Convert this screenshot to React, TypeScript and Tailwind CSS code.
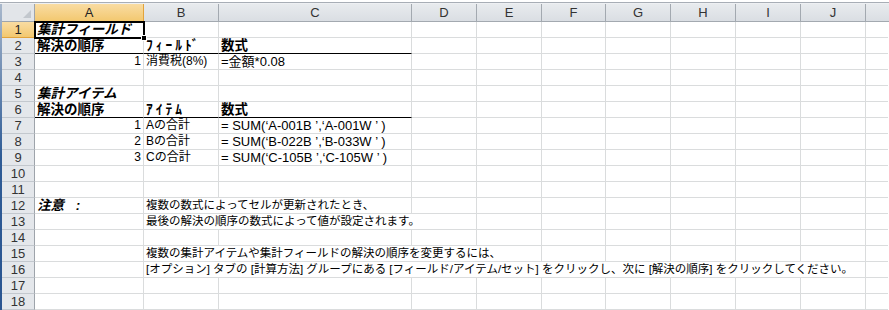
import React from "react";

const COLS = [109, 75, 193, 65, 65, 64, 65, 65, 65, 65, 22];
const LETTERS = ["A", "B", "C", "D", "E", "F", "G", "H", "I", "J", ""];

type Cell = { span?: number; text?: React.ReactNode; cls?: string; bottom?: boolean };

const BOLD = "font-bold text-[13.5px]";
const BI = "font-bold italic text-[13.5px]";
const LONG = "text-[11.5px]";
const FORM = "text-[13px]";

const ROWS: Cell[][] = [
  [{ text: "集計フィールド", cls: BI }],
  [
    { text: "解決の順序", cls: BOLD, bottom: true },
    { text: "ﾌｨｰﾙﾄﾞ", cls: BOLD + " tracking-[3px]", bottom: true },
    { text: "数式", cls: BOLD, bottom: true },
  ],
  [
    { text: "1", cls: "text-right text-[12px]" },
    { text: "消費税(8%)", cls: "text-[12px]" },
    { text: "=金額*0.08", cls: FORM },
  ],
  [],
  [{ text: "集計アイテム", cls: BI }],
  [
    { text: "解決の順序", cls: BOLD, bottom: true },
    { text: "ｱｲﾃﾑ", cls: BOLD + " tracking-[3px]", bottom: true },
    { text: "数式", cls: BOLD, bottom: true },
  ],
  [
    { text: "1", cls: "text-right text-[12px]" },
    { text: "Aの合計", cls: "text-[12px]" },
    { text: "= SUM(‘A-001B ’,‘A-001W ’ )", cls: FORM },
  ],
  [
    { text: "2", cls: "text-right text-[12px]" },
    { text: "Bの合計", cls: "text-[12px]" },
    { text: "= SUM(‘B-022B ’,‘B-033W ’ )", cls: FORM },
  ],
  [
    { text: "3", cls: "text-right text-[12px]" },
    { text: "Cの合計", cls: "text-[12px]" },
    { text: "= SUM(‘C-105B ’,‘C-105W ’ )", cls: FORM },
  ],
  [],
  [],
  [
    {
      text: (
        <>
          注意 <span className="ml-[8px]">:</span>
        </>
      ),
      cls: BI,
    },
    { span: 2, text: "複数の数式によってセルが更新されたとき、", cls: LONG },
  ],
  [{}, { span: 3, text: "最後の解決の順序の数式によって値が設定されます。", cls: LONG }],
  [],
  [{}, { span: 4, text: "複数の集計アイテムや集計フィールドの解決の順序を変更するには、", cls: LONG }],
  [
    {},
    {
      span: 9,
      text: "[オプション] タブの [計算方法] グループにある [フィールド/アイテム/セット] をクリックし、次に [解決の順序] をクリックしてください。",
      cls: LONG,
    },
  ],
  [],
  [],
];

function Row({ idx, cells }: { idx: number; cells: Cell[] }) {
  const out: React.ReactNode[] = [];
  let col = 0;
  let i = 0;
  while (col < COLS.length) {
    const c: Cell = cells[i] || {};
    const span = c.span || 1;
    let w = 0;
    for (let k = col; k < col + span && k < COLS.length; k++) w += COLS[k];
    const last = col + span >= COLS.length;
    out.push(
      <div
        key={col}
        style={{ width: w }}
        className={`h-full shrink-0 px-[2px] whitespace-nowrap overflow-visible leading-[15px] ${
          last ? "" : "border-r border-r-[#dadcdd]"
        } ${c.bottom ? "border-b border-b-black" : "border-b border-b-[#dadcdd]"} ${c.cls || ""}`}
      >
        {c.text}
      </div>
    );
    col += span;
    i++;
  }
  const selected = idx === 1;
  return (
    <div className="relative flex h-[16px]">
      <div
        className={`w-[33px] shrink-0 h-full flex items-center justify-center text-[13px] leading-none border-r border-b ${
          selected
            ? "bg-linear-to-b from-[#f9dca2] to-[#f3c86f] border-r-[#e2a33b] border-b-[#e2a33b] text-[#222]"
            : "bg-[#e4e7eb] border-r-[#9ea4ab] border-b-[#c3c8ce] text-[#333]"
        }`}
      >
        {idx}
      </div>
      {out}
    </div>
  );
}

export default function App() {
  return (
    <div className="w-[889px] h-[310px] overflow-hidden bg-white flex flex-col font-['Liberation_Sans','Noto_Sans_CJK_JP',sans-serif] text-[12px] text-black">
      <div className="h-[2px] bg-white shrink-0" />
      <div className="h-px bg-[#a8aeb6] shrink-0" />
      <div className="h-px bg-[#eef0f3] shrink-0" />
      <div className="flex flex-1">
        <div className="w-[2px] shrink-0 bg-linear-to-b from-[#a9b8cc] via-[#2f5c96] to-[#2a5591]" />
        <div className="flex-1 flex flex-col">
          <div className="flex h-[18px] shrink-0">
            <div className="relative w-[33px] shrink-0 h-full bg-[#e2e5e9] border-r border-b border-[#9ea4ab]">
              <svg className="absolute right-[3px] bottom-[3px]" width="8" height="8" viewBox="0 0 8 8">
                <polygon points="8,0 8,8 0,8" fill="#c2c7cd" />
              </svg>
            </div>
            {COLS.map((w, i) => (
              <div
                key={i}
                style={{ width: i === COLS.length - 1 ? undefined : w }}
                className={`${i === COLS.length - 1 ? "flex-1" : "shrink-0"} h-full flex items-center justify-center text-[13px] leading-none border-b ${
                  i === COLS.length - 1 ? "" : "border-r"
                } ${
                  i === 0
                    ? "bg-linear-to-b from-[#f9dca2] to-[#f3c86f] border-[#e2a33b] text-[#222]"
                    : "bg-linear-to-b from-[#e8ebee] to-[#dadee3] border-[#a3a9b0] text-[#333]"
                }`}
              >
                {LETTERS[i]}
              </div>
            ))}
          </div>
          <div className="relative flex flex-col">
            {ROWS.map((cells, r) => (
              <Row key={r} idx={r + 1} cells={cells} />
            ))}
            <div className="pointer-events-none absolute left-[32px] top-[-1px] w-[111px] h-[18px] border-2 border-black">
              <div className="absolute right-[-4px] bottom-[-4px] w-[6px] h-[6px] bg-black border border-white" />
            </div>
          </div>
        </div>
      </div>
    </div>
  );
}
